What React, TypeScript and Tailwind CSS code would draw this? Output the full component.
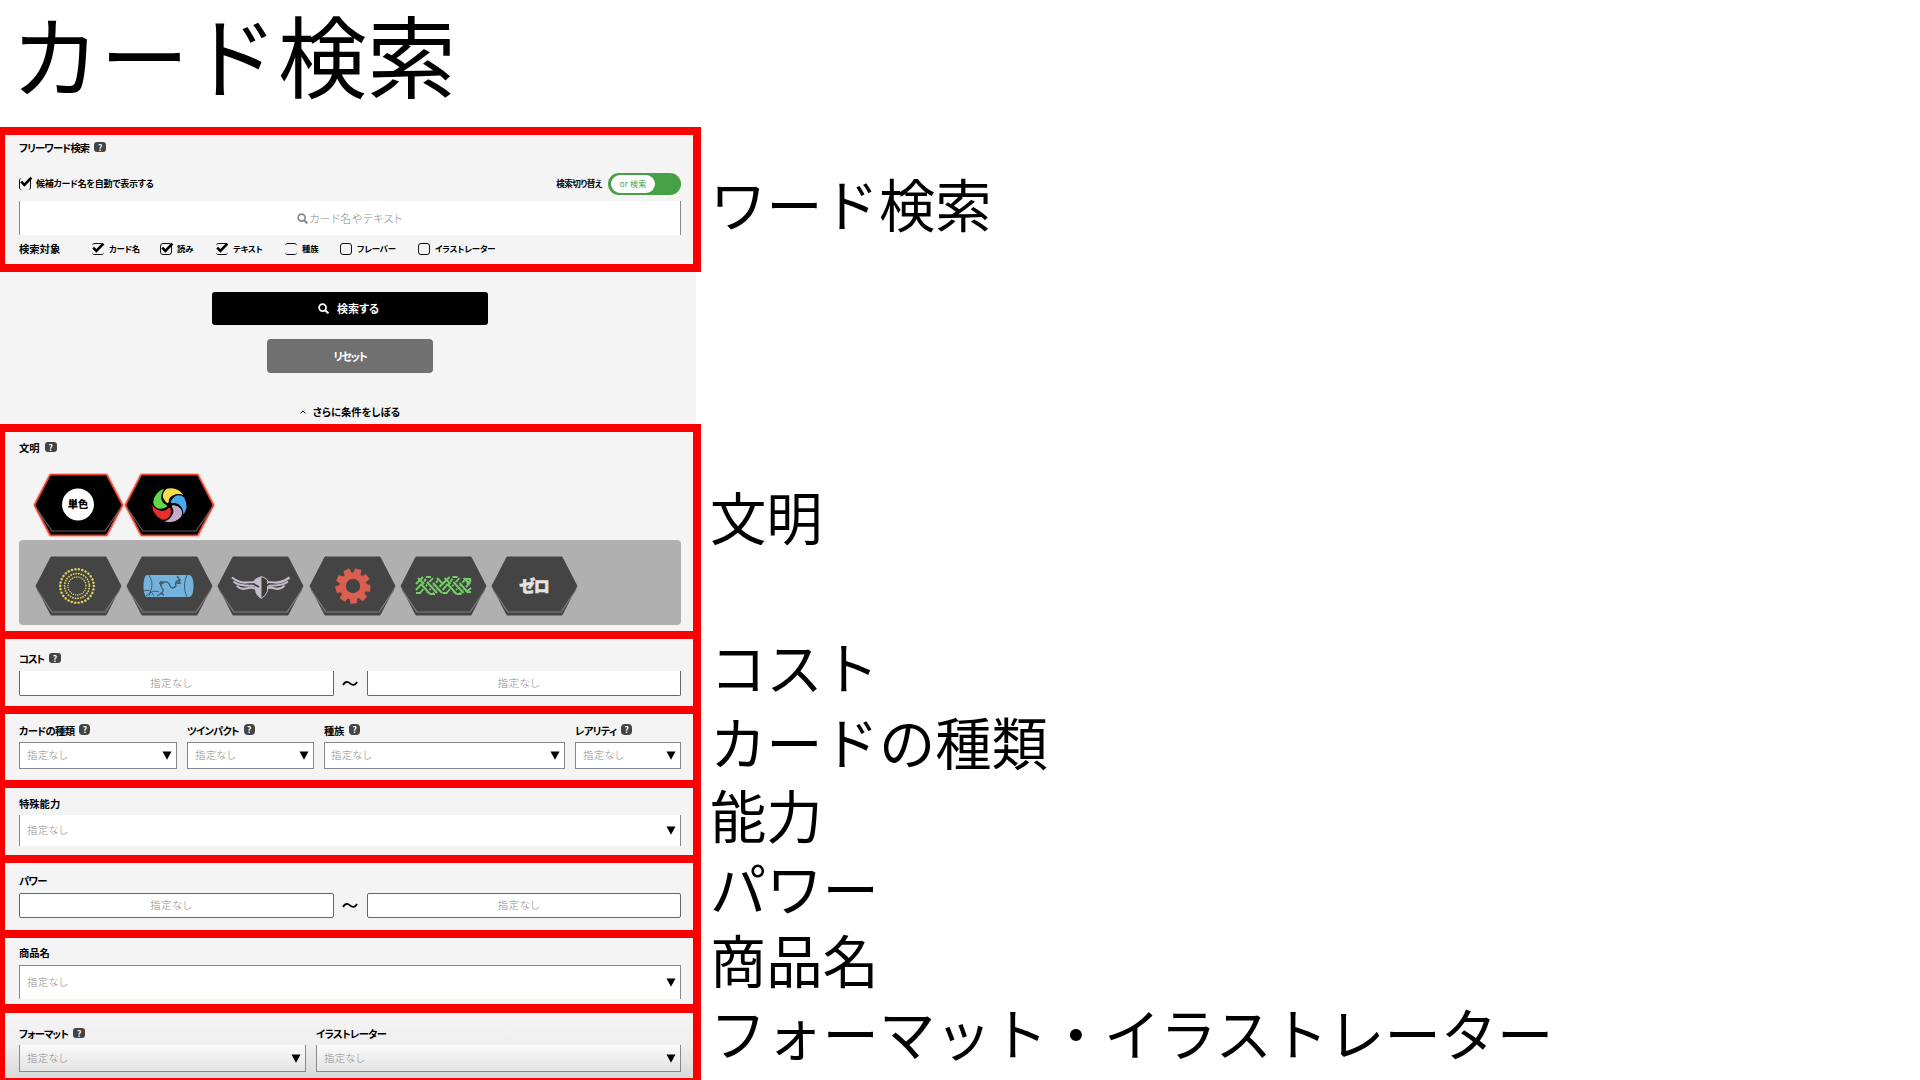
import type { ReactNode } from "react";

const HEX_TOP = 2;

function Help({ round = false }: { round?: boolean }) {
  return (
    <span
      className={
        round
          ? "ml-[5px] flex h-[11px] w-[11px] -translate-y-px items-center justify-center rounded-[4px] bg-[#444] text-[8.500px] leading-none font-bold tracking-normal text-white"
          : "ml-[5px] flex h-[10px] w-[12px] -translate-y-px items-center justify-center rounded-[3px] bg-[#444] text-[8.500px] leading-none font-bold tracking-normal text-white"
      }
    >
      ?
    </span>
  );
}

function Label({
  children,
  help,
  round,
  track = "",
}: {
  children: ReactNode;
  help?: boolean;
  round?: boolean;
  track?: string;
}) {
  return (
    <div className="flex items-center whitespace-nowrap text-[10.3px] leading-[14px] font-bold text-black">
      <span className={track}>{children}</span>
      {help && <Help round={round} />}
    </div>
  );
}

function Section({ className, children }: { className: string; children: ReactNode }) {
  return (
    <section className={"shrink-0 border-8 border-[#fa0000] bg-[#f4f4f4] pr-3 pl-[14px] " + className}>
      {children}
    </section>
  );
}

function Select({ className, pad = "pl-[7px]" }: { className: string; pad?: string }) {
  return (
    <div className={"flex items-center justify-between border-[#888] pr-[4px] " + pad + " " + className}>
      <span className="text-[10.4px] leading-none font-light tracking-[0.25px] text-[#8a8a8a]">指定なし</span>
      <svg width="10" height="9" viewBox="0 0 10 9">
        <path d="M0.500 0.500H9.500L5 8.800Z" fill="#000" />
      </svg>
    </div>
  );
}

function Range({ className }: { className: string }) {
  return (
    <div className="flex items-center">
      <div className={"flex w-[315px] items-center justify-center border-[#666] bg-white pr-[11px] " + className}>
        <span className="text-[10.6px] leading-none font-light tracking-[0.4px] text-[#8a8a8a]">指定なし</span>
      </div>
      <div className="flex w-[33px] justify-center pr-[2px]">
        <svg width="16" height="7" viewBox="0 0 16 7">
          <path d="M1 5C3 1.2 5.5 1.2 8 3.4S13 5.6 15 2" fill="none" stroke="#000" strokeWidth="1.9" />
        </svg>
      </div>
      <div className={"flex w-[314px] items-center justify-center border-[#666] bg-white pr-[11px] " + className}>
        <span className="text-[10.6px] leading-none font-light tracking-[0.4px] text-[#8a8a8a]">指定なし</span>
      </div>
    </div>
  );
}

function Check({ on, sides = "border" }: { on?: boolean; sides?: string }) {
  return (
    <span className={"relative block h-[12px] w-[12px] shrink-0 rounded-[3px] border-[#111] " + sides}>
      {on && (
        <svg className="absolute -top-[2px] -left-px" width="14" height="12" viewBox="0 0 14 12">
          <path d="M2.2 5.6L5.4 8.8L12.4 1.6" fill="none" stroke="#000" strokeWidth="2.6" />
        </svg>
      )}
    </span>
  );
}

function Magnifier({ color, size }: { color: string; size: number }) {
  return (
    <svg width={size} height={size} viewBox="0 0 11 11">
      <circle cx="4.6" cy="4.6" r="3.5" fill="none" stroke={color} strokeWidth="1.7" />
      <path d="M7.2 7.2L10.4 10.4" stroke={color} strokeWidth="2" />
    </svg>
  );
}

function Hex({ glow, children }: { glow?: boolean; children: ReactNode }) {
  const points = `1,31 16,${HEX_TOP} 71,${HEX_TOP} 86,31 71,60 16,60`;
  return (
    <svg className="w-[91.2px] shrink-0 overflow-visible" height="62" viewBox="0 0 91.2 62">
      {glow && (
        <>
          <polygon points={points} fill="none" stroke="#ff8a7a" strokeWidth="6" strokeLinejoin="round" opacity="0.6" />
          <polygon points={points} fill="none" stroke="#e8432e" strokeWidth="4" strokeLinejoin="round" />
        </>
      )}
      <polygon points={points} fill={glow ? "#000" : "#444"} stroke={glow ? "#000" : "#444"} strokeLinejoin="round" />
      <path d="M2 35L17 57H70L85 35" fill="none" stroke={glow ? "#5c5c5c" : "#808080"} strokeWidth="1.2" />
      {children}
    </svg>
  );
}

const SWIRL = ["#f5dc4a", "#4aa8ee", "#c3acc9", "#e5302b", "#63d648"];

function Swirl() {
  return (
    <g transform="translate(43.5 31)">
      {SWIRL.map((c, i) => (
        <path
          key={c}
          transform={`rotate(${i * 72})`}
          d="M-2.500 -1C-9.500 -7 -8.500 -13.500 -3 -16.800C4.500 -18.500 12 -15.500 14.800 -9C8 -11.500 -0.500 -10 -0.200 -2.500Z"
          fill={c}
          stroke="#000"
          strokeWidth="1.2"
        />
      ))}
      <circle r="2.3" fill="#000" />
    </g>
  );
}

function LightRings() {
  return (
    <g fill="none" stroke="#ddd15a" strokeLinecap="round">
      <circle cx="42" cy="31" r="16.8" strokeWidth="2.5" strokeDasharray="0.1 3.4" />
      <circle cx="42" cy="31" r="12.4" strokeWidth="1.8" strokeDasharray="0.1 2.5" />
      <circle cx="42" cy="31" r="9" strokeWidth="1.4" strokeDasharray="0.1 2.1" />
    </g>
  );
}

function WaterScroll() {
  return (
    <g>
      <path d="M20.500 20H63.500Q67.500 21 67.500 31T63.500 42H20.500Q17.500 40 17.500 31T20.500 20Z" fill="#74b4dc" />
      <g fill="none" stroke="#3d5c70" strokeWidth="1">
        <path d="M23 20Q27 26 26 31T23 41" />
        <path d="M61 20Q58.500 25 58.500 31T61 42" />
        <path d="M18 36Q24 33 28 41M20 41Q27 34 33 37" />
        <path d="M31 41Q40 37 36 33Q32 27 38 27Q43 26 44 31Q46 35 50 31Q48 26 54 25L51 21" strokeWidth="1.3" />
        <path d="M33 28H38M35 26V31M50 28H55M53 24V29M34 38L38 40" strokeWidth="1.6" />
      </g>
    </g>
  );
}

function WingedMask() {
  return (
    <g>
      <g fill="none" stroke="#c4bdca">
        <path d="M15 22.500Q22 28 29 27.500T39 27" strokeWidth="2.2" />
        <path d="M16.500 26.500Q22 31.500 39 30.500" strokeWidth="2" />
        <path d="M20 30.500Q23 35 29 33.500T39 34" strokeWidth="2" />
        <path d="M72.500 22.500Q65 28 58 27.500T49 27" strokeWidth="2.2" />
        <path d="M71 26.500Q65 31.500 49 30.500" strokeWidth="2" />
        <path d="M67.500 30.500Q64 35 58 33.500T49 34" strokeWidth="2" />
      </g>
      <path d="M37 25Q41 22 44 21.500V43.500Q38 40 38 34Z" fill="#c4bdca" />
      <path d="M44 21.500Q47 22 50.500 25V36Q49 41 44 43.500Z" fill="#3c3c3c" stroke="#c4bdca" strokeWidth="1" />
      <path d="M36.500 29L42 32M52 29L46.500 32" stroke="#3b3b3b" strokeWidth="1.700" />
    </g>
  );
}

function Gear() {
  return (
    <g transform="translate(44 31)">
      {[0, 1, 2, 3, 4, 5, 6, 7, 8].map((i) => (
        <path key={i} d="M-3.800 -11L-3.500 -17.200L3 -17.800L4 -11Z" fill="#da5f51" transform={`rotate(${i * 40 + 18})`} />
      ))}
      <circle r="10.4" fill="none" stroke="#da5f51" strokeWidth="6.4" />
    </g>
  );
}

function Weave() {
  return (
    <g fill="none" strokeWidth="1.9">
      {[0, 26.5].map((dx) => (
        <g key={dx} transform={`translate(${dx} 0)`}>
          <g stroke="#74cf66">
            <path d="M16 35L26 24M20 38L33 23M27 38L40 23M33 39L44 27" />
          </g>
          <path d="M18 23L23 28M22 30L30 38M28 28L36 37M34 28L42 38M38 23L43 28" stroke="#444" strokeWidth="3.6" />
          <g stroke="#74cf66">
            <path d="M18 23L24 29M21 29L30 39M27 27L37 38M33 28L42 38M37 23L43 29" />
            <path d="M16 29L23 22M16 38H21M26 22H31M30 39H35" />
          </g>
        </g>
      ))}
      <path d="M64 24H71M66 37L71 33M69 37H71M67 29L71 25" stroke="#74cf66" />
    </g>
  );
}

const LABELS: { text: string; box: string }[] = [
  { text: "ワード検索", box: "h-[254px] pt-[48px]" },
  { text: "文明", box: "h-[204px] pt-[107px]" },
  { text: "コスト", box: "h-[75px] pt-[53px]" },
  { text: "カードの種類", box: "h-[73px] pt-[53px]" },
  { text: "能力", box: "h-[73px] pt-[53px]" },
  { text: "パワー", box: "h-[73px] pt-[53px]" },
  { text: "商品名", box: "h-[73px] pt-[52px]" },
  { text: "フォーマット・イラストレーター", box: "h-[73px] pt-[52px]" },
];

const TARGETS = [
  { text: "カード名", on: true, sides: "border-y", w: "w-[68px]" },
  { text: "読み", on: true, sides: "border", w: "w-[56px]" },
  { text: "テキスト", on: true, sides: "border-y", w: "w-[69px]" },
  { text: "種族", on: false, sides: "border-y", w: "w-[55px]" },
  { text: "フレーバー", on: false, sides: "border", w: "w-[78px]" },
  { text: "イラストレーター", on: false, sides: "border", w: "w-[90px]" },
];

export default function App() {
  return (
    <main
      lang="ja"
      className="flex h-[1080px] w-[1920px] flex-col overflow-hidden bg-white font-['Noto_Sans_CJK_JP',sans-serif] text-black"
    >
      <h1 className="h-[127px] shrink-0 pt-[9px] pl-[11px] text-[89px] leading-[88px] font-normal whitespace-nowrap">
        カード検索
      </h1>
      <div className="flex h-[953px] shrink-0">
        <div className="-ml-[3px] flex w-[704px] shrink-0 flex-col [font-feature-settings:'palt']">
          <Section className="h-[145px]">
            <div className="flex h-[26px] items-center">
              <Label help track="tracking-[-0.850px]">フリーワード検索</Label>
            </div>
            <div className="flex h-[40px] items-center pt-[5px]">
              <Check on sides="border-x" />
              <span className="ml-[5px] text-[9px] leading-none font-bold tracking-[-0.250px] whitespace-nowrap">
                候補カード名を自動で表示する
              </span>
              <span className="ml-auto text-[8.600px] leading-none font-bold tracking-[-0.500px] whitespace-nowrap">
                検索切り替え
              </span>
              <div className="ml-[6px] flex h-[22px] w-[73px] items-center rounded-full bg-[#46a046] pl-[3px]">
                <span className="flex h-[18px] w-[44px] items-center justify-center rounded-full bg-white text-[8px] leading-none tracking-[0.2px] text-[#46a046]">
                  or 検索
                </span>
              </div>
            </div>
            <div className="flex h-[34px] items-center justify-center border-x border-[#888] bg-white">
              <Magnifier color="#888" size={11} />
              <span className="ml-px text-[11px] leading-none font-light tracking-[0.450px] text-[#8a8a8a]">
                カード名やテキスト
              </span>
            </div>
            <div className="flex h-[27px] items-center whitespace-nowrap">
              <span className="w-[73px] pt-[2px] text-[10.300px] leading-none font-bold">検索対象</span>
              {TARGETS.map((t) => (
                <label key={t.text} className={"flex items-center gap-[5px] " + t.w}>
                  <Check on={t.on} sides={t.sides} />
                  <span className="text-[8.400px] leading-none font-bold tracking-[-0.150px]">{t.text}</span>
                </label>
              ))}
            </div>
          </Section>

          <div className="ml-[3px] flex h-[152px] w-[696px] shrink-0 flex-col items-center bg-[#f4f4f4] pt-[20px] pl-[4px]">
            <button className="flex h-[33px] w-[276px] items-center justify-center gap-[8px] rounded-[3px] bg-black pr-[3px] text-[11px] leading-none font-bold text-white">
              <Magnifier color="#fff" size={11} />
              検索する
            </button>
            <button className="mt-[14px] h-[34px] w-[166px] rounded-[4px] bg-[#707070] text-[11px] leading-none font-bold tracking-[-1.300px] text-white">
              リセット
            </button>
            <div className="mt-[32px] flex h-[14px] items-center gap-[7px] text-[10.300px] leading-none font-bold">
              <svg width="6" height="4" viewBox="0 0 6 4">
                <path d="M0.500 3.200L3 1L5.500 3.200" fill="none" stroke="#000" />
              </svg>
              さらに条件をしぼる
            </div>
          </div>

          <Section className="h-[215px]">
            <div className="flex h-[32px] items-center">
              <Label help>文明</Label>
            </div>
            <div className="mt-[10px] flex h-[66px] items-start pl-[16px]">
              <Hex glow>
                <circle cx="43" cy="30.500" r="16" fill="#fff" />
                <text x="43" y="34.500" textAnchor="middle" fontSize="10.3" fontWeight="900" fill="#000">
                  単色
                </text>
              </Hex>
              <Hex glow>
                <Swirl />
              </Hex>
            </div>
            <div className="flex h-[85px] items-center rounded-[4px] bg-[#b0b0b0] pt-[7px] pl-[16px]">
              <Hex>
                <LightRings />
              </Hex>
              <Hex>
                <WaterScroll />
              </Hex>
              <Hex>
                <WingedMask />
              </Hex>
              <Hex>
                <Gear />
              </Hex>
              <Hex>
                <Weave />
              </Hex>
              <Hex>
                <text
                  x="43"
                  y="37"
                  textAnchor="middle"
                  fontSize="16"
                  fontWeight="900"
                  fill="#e4e4e4"
                  letterSpacing="-1"
                  stroke="#e4e4e4"
                  strokeWidth="0.5"
                >
                  ゼロ
                </text>
              </Hex>
            </div>
          </Section>

          <Section className="-mt-2 h-[83px]">
            <div className="flex h-[32px] items-center pt-[8px]">
              <Label help track="tracking-[-1.200px]">コスト</Label>
            </div>
            <Range className="h-[25px] rounded-b-[2px] border-x border-b" />
          </Section>

          <Section className="-mt-2 h-[82px]">
            <div className="grid grid-cols-[158px_127px_241px_106px] gap-x-[10px]">
              <div className="flex h-[28px] items-center pt-[5px]">
                <Label help round track="tracking-[-0.650px]">カードの種類</Label>
              </div>
              <div className="flex h-[28px] items-center pt-[5px]">
                <Label help round track="tracking-[-0.800px]">ツインパクト</Label>
              </div>
              <div className="flex h-[28px] items-center pt-[5px]">
                <Label help round track="tracking-[-0.200px]">種族</Label>
              </div>
              <div className="flex h-[28px] items-center pt-[5px]">
                <Label help round track="tracking-[-0.800px]">レアリティ</Label>
              </div>
              <Select className="h-[27px] border bg-white" />
              <Select className="h-[27px] border bg-white" />
              <Select className="h-[27px] border bg-white" pad="pl-[6px]" />
              <Select className="h-[27px] border bg-white" />
            </div>
          </Section>

          <Section className="-mt-2 h-[83px]">
            <div className="flex h-[27px] items-center pt-[4px]">
              <Label>特殊能力</Label>
            </div>
            <Select className="h-[31px] border-x bg-white" />
          </Section>

          <Section className="-mt-2 h-[83px]">
            <div className="flex h-[30px] items-center pt-[6px]">
              <Label track="tracking-[-0.650px]">パワー</Label>
            </div>
            <Range className="h-[25px] rounded-[2px] border" />
          </Section>

          <Section className="-mt-2 h-[83px] border-b-[9px]">
            <div className="flex h-[27px] items-center pt-[3px]">
              <Label>商品名</Label>
            </div>
            <Select className="h-[34px] border-x border-t bg-white" />
          </Section>

          <Section className="-mt-[9px] h-[82px] border-t-[9px] bg-linear-to-b from-[#f4f4f4] via-[#efefef] to-[#d9d9d9]">
            <div className="grid grid-cols-[287px_365px] gap-x-[10px]">
              <div className="flex h-[32px] items-center pt-[10px]">
                <Label help track="tracking-[-0.900px]">フォーマット</Label>
              </div>
              <div className="flex h-[32px] items-center pt-[10px]">
                <Label track="tracking-[-0.700px]">イラストレーター</Label>
              </div>
              <Select className="h-[27px] border-x border-b bg-linear-to-b from-[#fafafa] to-[#e4e4e4]" />
              <Select className="h-[27px] border-x border-b bg-linear-to-b from-[#fafafa] to-[#e4e4e4]" />
            </div>
          </Section>
        </div>

        <div className="flex flex-col pl-[9px]">
          {LABELS.map((l) => (
            <div key={l.text} className={"shrink-0 text-[56.300px] leading-[56px] whitespace-nowrap " + l.box}>
              {l.text}
            </div>
          ))}
        </div>
      </div>
    </main>
  );
}
